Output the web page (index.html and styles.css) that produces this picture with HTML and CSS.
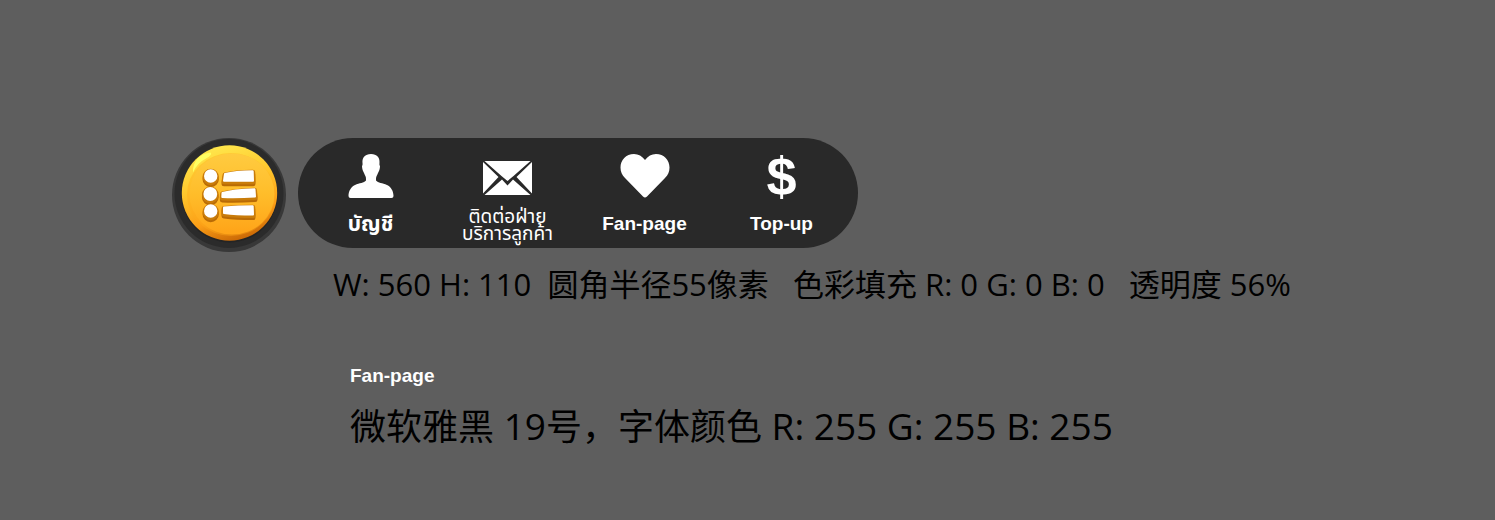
FILE: index.html
```html
<!DOCTYPE html>
<html lang="zh-CN">
<head>
<meta charset="utf-8">
<meta name="viewport" content="width=device-width, initial-scale=1">
<title>Menu</title>
<link rel="stylesheet" href="styles.css">
</head>
<body>
<main class="page">
  <div class="toolbar">
    <button class="toggle" type="button" aria-label="Menu">
      <svg class="toggle-art" viewBox="0 0 114 114" aria-hidden="true">
        <defs>
          <linearGradient id="rim" x1="0.3" y1="0" x2="0.6" y2="1">
            <stop offset="0" stop-color="#ffe94e"/>
            <stop offset="0.4" stop-color="#ffc62c"/>
            <stop offset="0.75" stop-color="#fb9d16"/>
            <stop offset="1" stop-color="#c96705"/>
          </linearGradient>
          <linearGradient id="face" x1="0" y1="0" x2="0" y2="1">
            <stop offset="0" stop-color="#ffcb40"/>
            <stop offset="0.5" stop-color="#ffbd2a"/>
            <stop offset="1" stop-color="#ffa318"/>
          </linearGradient>
          <g id="rows" stroke-linejoin="round">
            <circle cx="38.7" cy="38" r="5.7"/>
            <circle cx="38.3" cy="56" r="5.9"/>
            <circle cx="38.7" cy="73" r="5.7"/>
            <path d="M53 36Q63 33.500 80.700 33.200L81 42.700H52Z"/>
            <path d="M50.500 55Q61 52 82.500 51.200L83 58.500Q66 59.500 50.300 59Z"/>
            <path d="M52 69.500Q66 68.200 80.700 68.200L81 76.500Q64 76.500 52 75Z"/>
          </g>
        </defs>
        <circle cx="57" cy="57" r="57" fill="#383838"/>
        <circle cx="57" cy="55.5" r="54.5" fill="#2b2b2b"/>
        <circle cx="57.5" cy="56.5" r="48" fill="#242424"/>
        <circle cx="57.5" cy="55" r="47.7" fill="url(#rim)"/>
        <ellipse cx="59" cy="56.500" rx="44" ry="41.500" fill="#ffaa1c" opacity=".4"/>
        <ellipse cx="60" cy="56" rx="42.500" ry="40.500" fill="url(#face)"/>
        <path d="M21 34.500C20.500 23 28 15.500 38.500 14.500Q41 16.500 34 20.500Q25 25 21 34.500Z" fill="#ffff62"/>
        <use href="#rows" y="3" fill="#b96b05" stroke="#b96b05" stroke-width="5"/>
        <use href="#rows" y="1" fill="#c97c0a" stroke="#c97c0a" stroke-width="5"/>
        <use href="#rows" fill="#fff" stroke="#fff" stroke-width="2"/>
      </svg>
    </button>
    <nav class="menu" aria-label="Shortcuts">
      <a class="item" href="#account">
        <span class="icon"><svg width="46" height="44" viewBox="0 0 46 44" aria-hidden="true"><path fill="#fff" d="M23 0C29 0 32 3.5 31.500 9C31.300 10.500 31.500 11.500 32 12C32 15 31 17 30 19C29 21.500 28 22.500 28 25V26.500C30 29 34.500 29 39 31C43 33 45.500 37 45.500 42Q45.500 44 43.500 44H2.500Q.5 44 .5 42C.5 37 3 33 7 31C11.500 29 16 29 18 26.500V25C18 22.500 17 21.500 16 19C15 17 14 15 14 12C14.500 11.500 14.700 10.500 14.500 9C14 3.500 17 0 23 0Z"/></svg></span>
        <span class="label label-thai" lang="th">บัญชี</span>
      </a>
      <a class="item" href="#support">
        <span class="icon icon-low"><svg width="49" height="34" viewBox="0 0 49 34" aria-hidden="true"><path fill="#fff" d="M1.500 0H47.500L30.500 15L24.500 20L18.500 15ZM0 1L15.500 16L0 32.500ZM49 1L33.500 16L49 32.500ZM1.500 34L19 18.500L24.500 24.500L30 18.500L47.500 34Z"/></svg></span>
        <span class="label label-wrap" lang="th">ติดต่อฝ่าย<br>บริการลูกค้า</span>
      </a>
      <a class="item" href="#fan-page">
        <span class="icon"><svg width="50" height="44" viewBox="0 0 50 44" aria-hidden="true"><path fill="#fff" d="M25 6C28 2 31.500 0 36 0C44 0 49.500 6 49.500 13.500C49.500 18 48 21 45 24L27 42.500Q25 44.700 23 42.500L5 24C2 21 .5 18 .5 13.500C.5 6 6 0 14 0C18.500 0 22 2 25 6Z"/></svg></span>
        <span class="label">Fan-page</span>
      </a>
      <a class="item" href="#top-up">
        <span class="icon dollar" aria-hidden="true">$</span>
        <span class="label">Top-up</span>
      </a>
    </nav>
  </div>
  <section class="notes">
    <p class="note">W: 560 H: 110  圆角半径55像素   色彩填充 R: 0 G: 0 B: 0   透明度 56%</p>
    <p class="sample">Fan-page</p>
    <p class="note note-large">微软雅黑<span class="latin"> 19</span>号，字体颜色<span class="latin"> R: 255 G: 255 B: 255</span></p>
  </section>
</main>
</body>
</html>
```
FILE: styles.css
```css
* {
  box-sizing: border-box;
}

body {
  margin: 0;
  background: #5e5e5e;
  color: #000;
  font-family: "Liberation Sans", "Noto Sans Thai", sans-serif;
}

.page {
  padding: 138px 0 0 172px;
}

.toolbar {
  display: flex;
  align-items: flex-start;
  gap: 12px;
}

.toggle {
  flex: none;
  padding: 0;
  border: 0;
  border-radius: 50%;
  background: none;
  cursor: pointer;
}

.toggle-art {
  display: block;
  width: 114px;
}

.menu {
  display: grid;
  grid-template-columns: repeat(4, 137px);
  padding: 16px 8px 6px 4px;
  border-radius: 55px;
  background: #292929;
}

.item {
  display: flex;
  flex-direction: column;
  align-items: center;
  gap: 10px;
  color: #fff;
  text-decoration: none;
}

.icon {
  display: flex;
  align-items: center;
  justify-content: center;
  height: 44px;
}

.icon-low {
  padding-top: 4px;
}

.dollar {
  font-size: 54px;
  font-weight: 700;
  line-height: 44px;
}

.label {
  display: flex;
  align-items: center;
  min-height: 32px;
  font-size: 19px;
  font-weight: 700;
  line-height: 22px;
}

.label-thai {
  font-size: 21px;
}

.label-wrap {
  display: block;
  font-weight: 400;
  line-height: 17px;
  text-align: center;
}

.notes {
  padding: 12px 0 0 161px;
}

.note {
  margin: 0;
  font-family: "Open Sans", "Noto Sans CJK SC", sans-serif;
  font-size: 31px;
  line-height: 40px;
  white-space: pre;
}

.sample {
  margin: 61px 0 0 17px;
  color: #fff;
  font-size: 19px;
  font-weight: 700;
  line-height: 22px;
}

.note-large {
  margin: 15px 0 0 17px;
  font-size: 36px;
  line-height: 48px;
}

.latin {
  font-size: 37px;
}
```
